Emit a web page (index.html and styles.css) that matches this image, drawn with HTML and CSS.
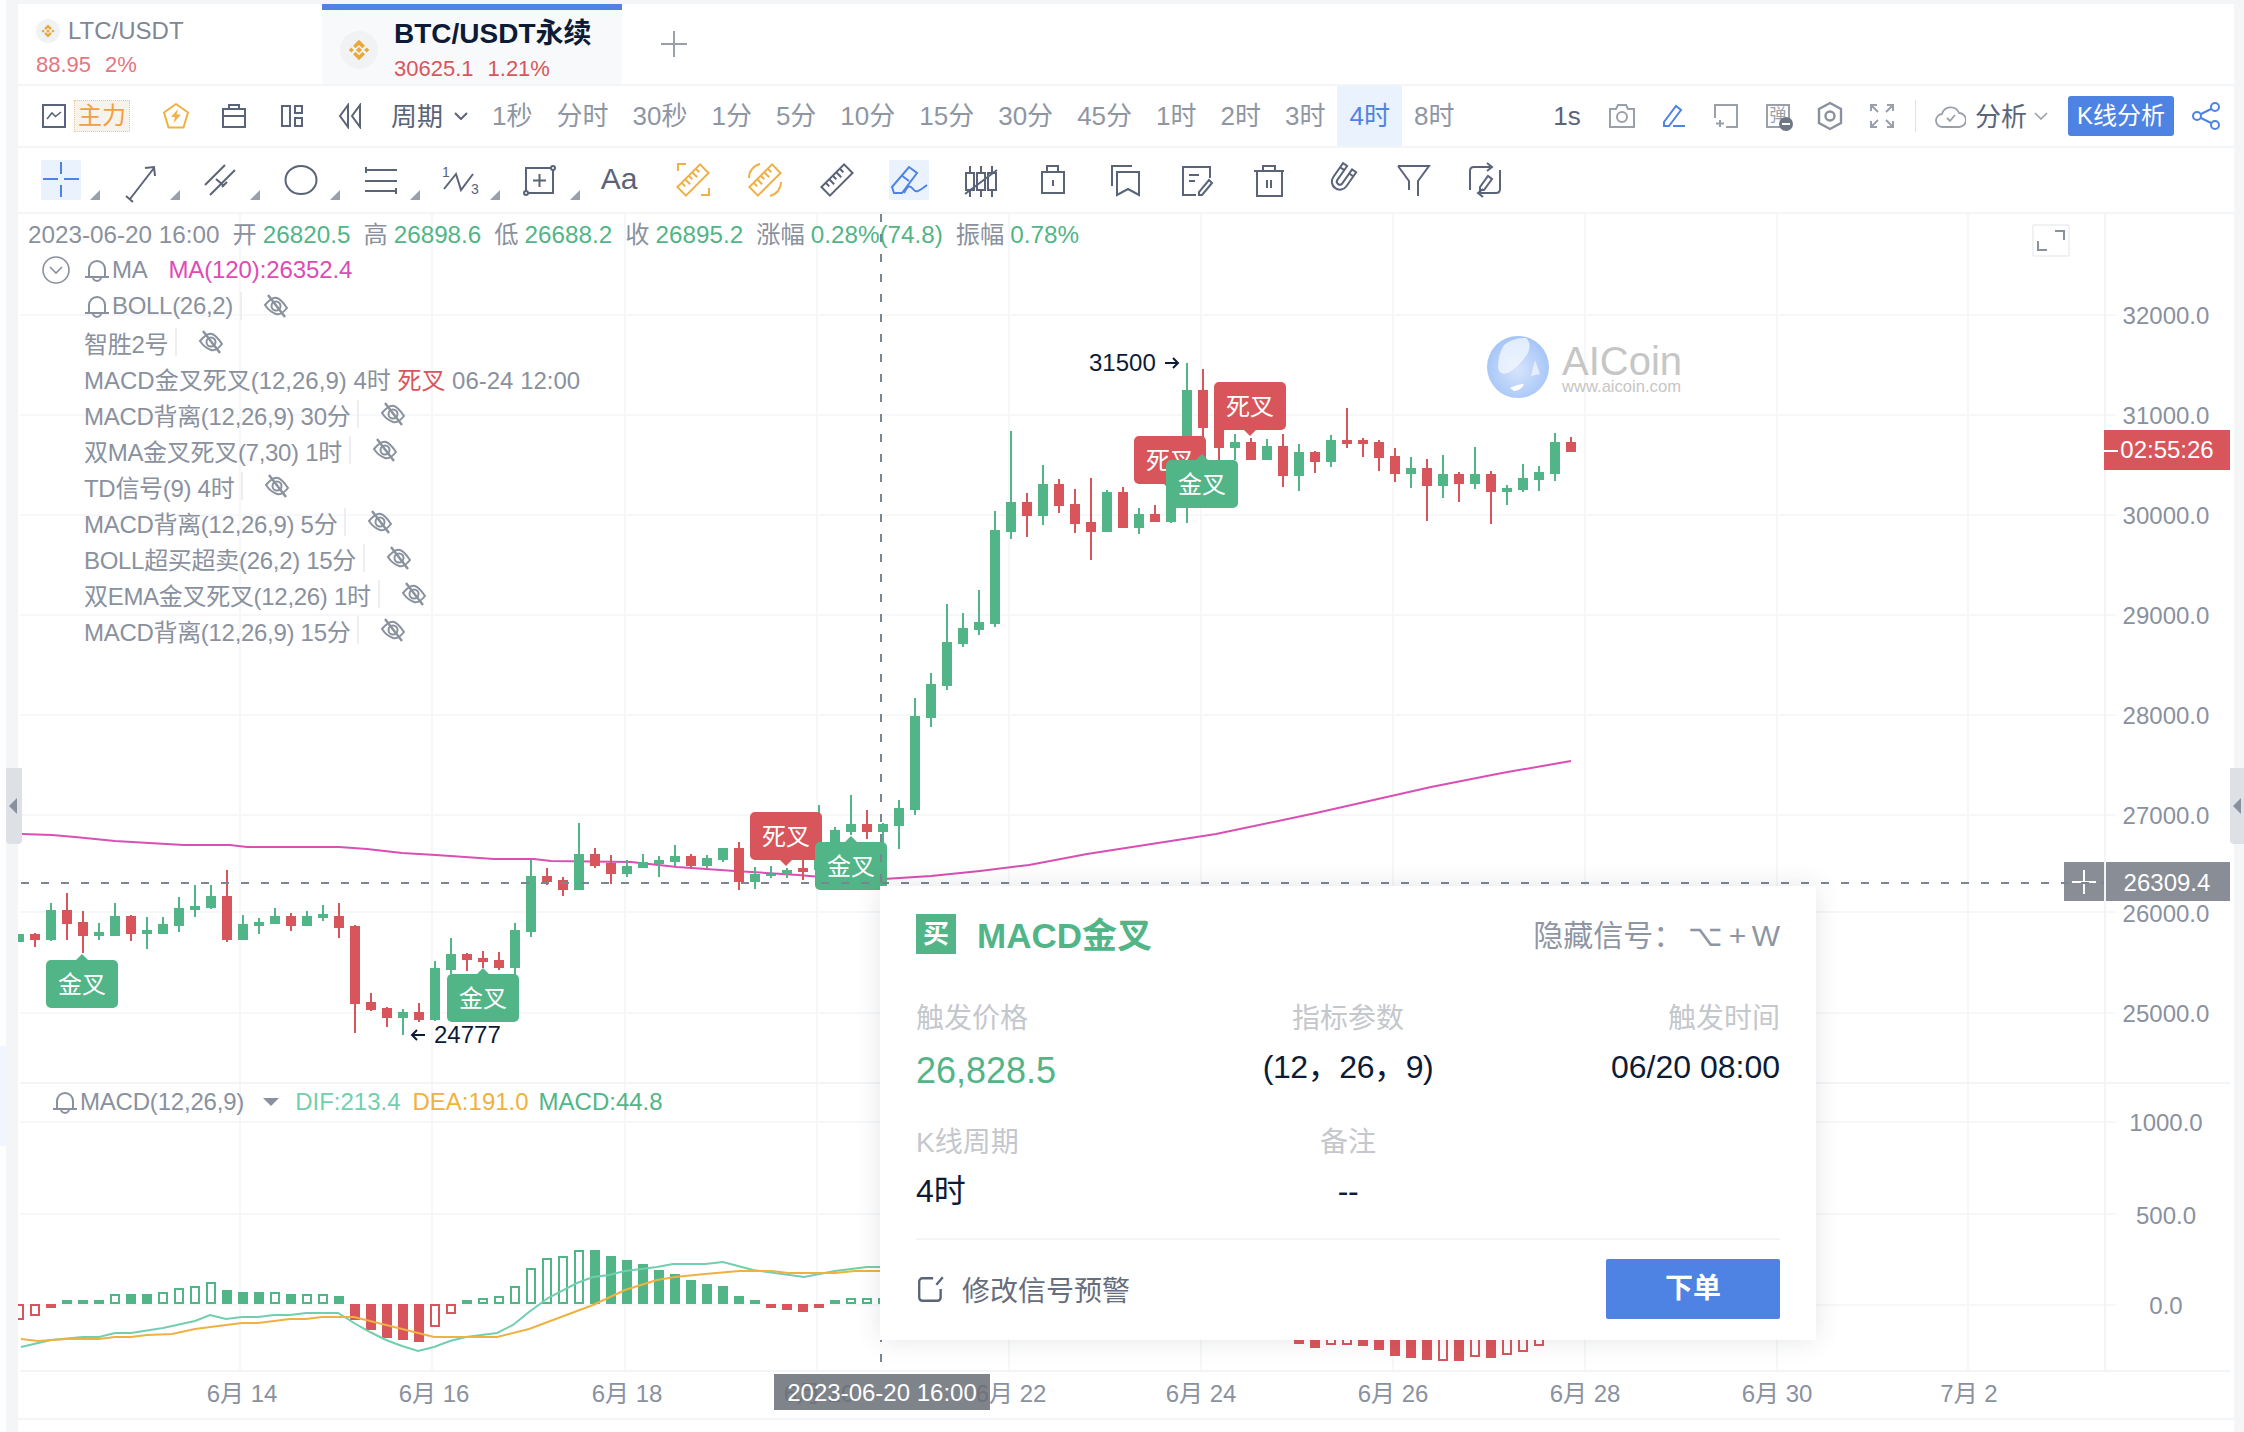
FILE: index.html
```html
<!DOCTYPE html>
<html lang="en">
<head>
    <meta charset="UTF-8">
    <title>BTC/USDT永续 - AICoin</title>
    <link rel="stylesheet" href="styles.css">
</head>
<body>
    <svg class="defs" width="0" height="0">
        <symbol id="bnb" viewBox="0 0 32 32">
            <circle cx="16" cy="16" r="16" fill="#f1f2f4"/>
            <g fill="#e9a93a" transform="translate(4.5 4.5) scale(.72)">
                <path d="M16 4l7 7-3 3-4-4-4 4-3-3z"/>
                <path d="M16 28l7-7-3-3-4 4-4-4-3 3z"/>
                <path d="M4 16l3-3 3 3-3 3z"/>
                <path d="M28 16l-3-3-3 3 3 3z"/>
                <path d="M16 12.5l3.5 3.5-3.5 3.5-3.5-3.5z"/>
            </g>
        </symbol>
        <symbol id="bell" viewBox="0 0 26 24">
            <path d="M5 19V11a8 8 0 0 1 16 0v8M1 19h24M9 19a4 4 0 0 0 8 0" fill="none" stroke="#8a919e" stroke-width="2"/>
        </symbol>
        <symbol id="eye" viewBox="0 0 26 26">
            <path d="M2 12c5-6 9-8 12-7s6 4 10 10c-4 5-8 7-11 6S6 18 2 12z" fill="none" stroke="#8a919e" stroke-width="2"/>
            <circle cx="13" cy="13" r="4.5" fill="none" stroke="#8a919e" stroke-width="2"/>
            <path d="M5 2l17 22" stroke="#8a919e" stroke-width="2.4"/>
        </symbol>
        <symbol id="ruler" viewBox="0 0 40 40">
            <g fill="none" stroke="currentColor" stroke-width="2" transform="rotate(-45 20 20)">
                <rect x="4" y="14" width="32" height="12"/>
                <path d="M10 14v5M15 14v7M20 14v5M25 14v7M30 14v5"/>
            </g>
        </symbol>
        <symbol id="arrow" viewBox="0 0 16 12">
            <path d="M1 6h13M9 1l5 5-5 5" fill="none" stroke="#0d1b36" stroke-width="2"/>
        </symbol>
    </svg>

    <div class="left-strip"><div class="strip-active"></div></div>

    <div class="main">
        <!-- symbol tabs -->
        <div class="tabs">
            <div class="tab">
                <div class="tab-name">
                    <svg class="coin-small"><use href="#bnb"/></svg>
                    <span>LTC/USDT</span>
                </div>
                <div class="tab-price"><span>88.95</span><span>2%</span></div>
            </div>
            <div class="tab tab-active">
                <svg class="coin-big"><use href="#bnb"/></svg>
                <div>
                    <div class="tab-name">BTC/USDT永续</div>
                    <div class="tab-price"><span>30625.1</span><span>1.21%</span></div>
                </div>
            </div>
            <svg class="tab-add" width="26" height="26" viewBox="0 0 26 26"><path d="M13 0v26M0 13h26" stroke="#9aa0ab" stroke-width="2"/></svg>
        </div>

        <!-- period toolbar -->
        <div class="toolbar">
            <svg class="icon first" width="24" height="24" viewBox="0 0 24 24" fill="none" stroke="#5a6478" stroke-width="2"><rect x="1" y="1" width="22" height="22"/><path d="M5 15l5-6 3.500 3.500 5.500-4.500" stroke-width="1.600"/></svg>
            <span class="main-force">主力</span>
            <div class="icon-btn force-gap">
                <svg width="28" height="28" viewBox="0 0 28 28" fill="none" stroke="#efb13f" stroke-width="2" stroke-linejoin="round"><path d="M14 2l12 8.500-4.500 15h-15L2 10.500z"/><path d="M16 7l-7 8h4l-1.500 6 7.500-8.500h-4.500z" fill="#efb13f" stroke="none"/></svg>
            </div>
            <div class="icon-btn">
                <svg width="24" height="24" viewBox="0 0 24 24" fill="none" stroke="#5a6478" stroke-width="2"><rect x="1" y="5" width="22" height="18"/><path d="M1 12h22M7 5V1h10v4"/></svg>
            </div>
            <div class="icon-btn">
                <svg width="22" height="22" viewBox="0 0 22 22" fill="none" stroke="#5a6478" stroke-width="2"><rect x="1" y="1" width="8" height="20"/><rect x="14" y="1" width="7" height="7"/><rect x="14" y="13" width="7" height="8"/></svg>
            </div>
            <div class="icon-btn">
                <svg width="24" height="26" viewBox="0 0 24 26" fill="none" stroke="#5a6478" stroke-width="2"><path d="M10 2L2 13l8 11zM22 2l-8 11 8 11z"/></svg>
            </div>
            <span class="period-menu">周期</span>
            <svg class="chevron" width="14" height="8" viewBox="0 0 14 8" fill="none" stroke="#5a6478" stroke-width="2"><path d="M1 1l6 6 6-6"/></svg>
            <div class="periods">
                <span>1秒</span><span>分时</span><span>30秒</span><span>1分</span><span>5分</span><span>10分</span><span>15分</span><span>30分</span><span>45分</span><span>1时</span><span>2时</span><span>3时</span><span class="on">4时</span><span>8时</span>
            </div>

            <span class="tick-1s">1s</span>
            <div class="tool-icon">
                <svg width="26" height="24" viewBox="0 0 26 24" fill="none" stroke="#9aa0aa" stroke-width="2"><path d="M1 5h6l2-4h8l2 4h6v18H1z"/><circle cx="13" cy="13" r="5"/></svg>
            </div>
            <div class="tool-icon">
                <svg width="26" height="24" viewBox="0 0 26 24" fill="none" stroke="#4f83e3" stroke-width="2"><path d="M3 18L15 2l5 4L8 22H3zM12 22h12"/></svg>
            </div>
            <div class="tool-icon">
                <svg width="24" height="24" viewBox="0 0 24 24" fill="none" stroke="#9aa0aa" stroke-width="2"><path d="M1 14V1h22v22H12M6 16v7M2 19.500h8"/></svg>
            </div>
            <div class="tool-icon">
                <div class="pop-icon">弹<i></i></div>
            </div>
            <div class="tool-icon">
                <svg width="26" height="30" viewBox="0 0 26 30" fill="none" stroke="#8a919e" stroke-width="2.400"><path d="M13 2l11 6v14l-11 6-11-6V8z"/><circle cx="13" cy="15" r="4.500"/></svg>
            </div>
            <div class="tool-icon">
                <svg width="24" height="24" viewBox="0 0 24 24" fill="none" stroke="#9aa0aa" stroke-width="2"><path d="M1 7V1h6M1 1l7 7M17 1h6v6M23 1l-7 7M1 17v6h6M1 23l7-7M23 17v6h-6M23 23l-7-7"/></svg>
            </div>
            <div class="tool-sep"></div>
            <svg class="cloud" width="31" height="24" viewBox="0 0 31 24" fill="none" stroke="#9aa0aa" stroke-width="1.800"><path d="M8 23a6.500 6.500 0 0 1-1-13A9 9 0 0 1 24 9a7 7 0 0 1 0 14z"/><path d="M12 14l3 3 5-6"/></svg>
            <span class="analysis">分析</span>
            <svg class="chevron-thin" width="14" height="8" viewBox="0 0 14 8" fill="none" stroke="#9aa0aa" stroke-width="1.600"><path d="M1 1l6 6 6-6"/></svg>
            <span class="kline-btn">K线分析</span>
            <svg class="share" width="28" height="28" viewBox="0 0 28 28" fill="none" stroke="#4f83e3" stroke-width="2"><circle cx="5" cy="14" r="4"/><circle cx="23" cy="5" r="4"/><circle cx="23" cy="23" r="4"/><path d="M9 12l10-5M9 16l10 5"/></svg>
        </div>

        <!-- drawing tools -->
        <div class="drawbar">
            <div class="tool more on-blue">
                <svg width="40" height="40" viewBox="0 0 40 40" stroke="#4f83e3" stroke-width="2" fill="none"><path d="M2 19h15M23 19h15M20 2v12M20 25v12"/></svg>
            </div>
            <div class="tool more">
                <svg width="40" height="40" viewBox="0 0 40 40" stroke="#5a6478" stroke-width="2" fill="none"><path d="M9 39L33 8M5 36l7 6M24 8l9-1 1 9"/></svg>
            </div>
            <div class="tool more">
                <svg width="40" height="40" viewBox="0 0 40 40" stroke="#5a6478" stroke-width="2" fill="none"><path d="M4 25L24 5M9 35l25-25M15 19l7 6M21 27l5-5"/></svg>
            </div>
            <div class="tool more">
                <svg width="40" height="40" viewBox="0 0 40 40" stroke="#5a6478" stroke-width="2" fill="none"><ellipse cx="20" cy="20" rx="15.500" ry="14"/></svg>
            </div>
            <div class="tool more">
                <svg width="40" height="40" viewBox="0 0 40 40" stroke="#5a6478" stroke-width="2" fill="none"><path d="M4 10h32M4 21h32M4 31h32M5 7v6M35 28v6"/></svg>
            </div>
            <div class="tool more">
                <svg width="40" height="40" viewBox="0 0 40 40" stroke="#5a6478" stroke-width="2" fill="none"><path d="M3 29L15 14l5 16 12-16"/><text class="wave-num" x="1" y="17">1</text><text class="wave-num" x="30" y="34">3</text></svg>
            </div>
            <div class="tool more">
                <svg width="40" height="40" viewBox="0 0 40 40" stroke="#5a6478" stroke-width="2" fill="none"><path d="M5 31V8h25M32 10v23H7M18.500 14v13M12 20.500h13"/><circle cx="5" cy="33" r="2"/><circle cx="32" cy="8" r="2"/></svg>
            </div>
            <div class="tool tool-text">Aa</div>
            <div class="tool orange">
                <svg width="40" height="40"><use href="#ruler"/></svg>
                <svg class="over" width="40" height="40" viewBox="0 0 40 40" fill="none" stroke="currentColor" stroke-width="2"><path d="M5 11V4h8M36 28v7h-8"/></svg>
            </div>
            <div class="tool orange">
                <svg width="40" height="40"><use href="#ruler"/></svg>
                <svg class="over" width="40" height="40" viewBox="0 0 40 40" fill="none" stroke="currentColor" stroke-width="2"><path d="M4 18A14 14 0 0 1 15 4M36 22a14 14 0 0 1-11 14"/></svg>
            </div>
            <div class="tool slate">
                <svg width="40" height="40"><use href="#ruler"/></svg>
            </div>
            <div class="tool on-blue">
                <svg width="40" height="40" viewBox="0 0 40 40" stroke="#4f83e3" stroke-width="2" fill="none"><path d="M3 27L20 7l8 6-15 20H5zM12 15l8 6M15 33c4-8 6-8 9-4s5 3 14-4"/></svg>
            </div>
            <div class="tool">
                <svg width="40" height="40" viewBox="0 0 40 40" stroke="#5a6478" stroke-width="2" fill="none"><rect x="5" y="13" width="8" height="17"/><rect x="16" y="13" width="8" height="17"/><rect x="27" y="13" width="8" height="17"/><path d="M9 6v7M9 30v7M20 6v7M20 30v7M31 6v7M31 30v7M4 34L36 10"/></svg>
            </div>
            <div class="tool">
                <svg width="40" height="40" viewBox="0 0 40 40" stroke="#5a6478" stroke-width="2" fill="none"><rect x="9" y="12" width="22" height="21"/><path d="M14 12V6h11v6M20 20v6"/></svg>
            </div>
            <div class="tool">
                <svg width="40" height="40" viewBox="0 0 40 40" stroke="#5a6478" stroke-width="2" fill="none"><path d="M7 26V6h20M12 12h22v23l-11-6-11 6z"/></svg>
            </div>
            <div class="tool">
                <svg width="40" height="40" viewBox="0 0 40 40" stroke="#5a6478" stroke-width="2" fill="none"><path d="M33 18V7H6v28h13M12 15h10M12 21h6M35 23L25 35h-3v-3l10-12z"/></svg>
            </div>
            <div class="tool">
                <svg width="40" height="40" viewBox="0 0 40 40" stroke="#5a6478" stroke-width="2" fill="none"><path d="M5 11h30M14 11V6h12v5M8 11v25h25V11M18 20v8M22 20v8"/></svg>
            </div>
            <div class="tool">
                <svg width="40" height="40" viewBox="0 0 40 40" stroke="#5a6478" stroke-width="2" fill="none"><path transform="rotate(35 20 20)" d="M12 5v17a8 8 0 0 0 16 0V5h-5v17a3 3 0 0 1-6 0V5zM12 10h5M23 10h5"/></svg>
            </div>
            <div class="tool">
                <svg width="40" height="40" viewBox="0 0 40 40" stroke="#5a6478" stroke-width="2" fill="none"><path d="M5 6h31L25 21v15M5 6l11 15v9"/></svg>
            </div>
            <div class="tool">
                <svg width="40" height="40" viewBox="0 0 40 40" stroke="#5a6478" stroke-width="2" fill="none"><path d="M5 30V11q0-4 4-4h17M22 3l5 4-5 4M35 10v19q0 4-4 4H14M18 29l-5 4 5 4M15 27l8-11 4 3-8 11h-4z"/></svg>
            </div>
        </div>

        <!-- chart -->
        <div class="chart">
            <svg class="chart-svg" id="chart" width="2216" height="1204" viewBox="18 214 2216 1204">
                <defs>
                    <radialGradient id="globe" cx=".5" cy=".55" r=".6">
                        <stop offset="0" stop-color="#d6e4fb"/>
                        <stop offset="1" stop-color="#9fc2f7"/>
                    </radialGradient>
                </defs>
                <!-- grid -->
                <g class="grid">
                    <path d="M20 315H2116M20 415H2116M20 515H2116M20 615H2116M20 715H2116M20 815H2116M20 912H2116M20 1013H2116"/>
                    <path d="M20 1122H2116M20 1214H2116M20 1305H2116"/>
                    <path d="M240 214V1370M432 214V1370M625 214V1370M817 214V1370M1009 214V1370M1201 214V1370M1393 214V1370M1585 214V1370M1777 214V1370M1968 214V1370"/>
                </g>
                <path class="pane-line" d="M20 1083H2230M20 1371H2230M2105 214V1370"/>

                <!-- watermark -->
                <circle cx="1518" cy="367" r="31" fill="url(#globe)"/>
                <path d="M1504 345q10-8 22-7 6 5 2 15-9 14-20 20-9 3-10-6 0-12 6-22z" fill="#f4f8fe" opacity=".75"/>
                <path d="M1510 388q8-4 14-4-2 6-10 7z" fill="#fff"/>
                <path d="M1535 360l5 14-9 2z" fill="#fff" opacity=".6"/>
                <text class="wm-title" x="1562" y="375">AICoin</text>
                <text class="wm-url" x="1562" y="392">www.aicoin.com</text>

                <!-- expand toggle -->
                <path class="expand-box" d="M2033 225h36v31h-36z"/>
                <path class="expand-mark" d="M2055 231h9v9M2047 250h-9v-9"/>

                <g id="macd"></g>
                <polyline id="dif" class="line-dif"></polyline>
                <polyline id="dea" class="line-dea"></polyline>
                <polyline id="ma" class="line-ma"></polyline>
                <g id="candles"></g>

                <!-- price axis -->
                <g class="axis-labels">
                    <text x="2166" y="324">32000.0</text>
                    <text x="2166" y="424">31000.0</text>
                    <text x="2166" y="524">30000.0</text>
                    <text x="2166" y="624">29000.0</text>
                    <text x="2166" y="724">28000.0</text>
                    <text x="2166" y="824">27000.0</text>
                    <text x="2166" y="922">26000.0</text>
                    <text x="2166" y="1022">25000.0</text>
                    <text x="2166" y="1131">1000.0</text>
                    <text x="2166" y="1224">500.0</text>
                    <text x="2166" y="1314">0.0</text>
                </g>
                <!-- time axis -->
                <g class="axis-labels">
                    <text x="242" y="1402">6月 14</text>
                    <text x="434" y="1402">6月 16</text>
                    <text x="627" y="1402">6月 18</text>
                    <text x="819" y="1402">6月 20</text>
                    <text x="1011" y="1402">6月 22</text>
                    <text x="1201" y="1402">6月 24</text>
                    <text x="1393" y="1402">6月 26</text>
                    <text x="1585" y="1402">6月 28</text>
                    <text x="1777" y="1402">6月 30</text>
                    <text x="1969" y="1402">7月 2</text>
                </g>
            </svg>

            <!-- signal tags -->
            <div class="tag green up tag-a">金叉</div>
            <div class="tag green up tag-b">金叉</div>
            <div class="tag red down tag-c">死叉</div>
            <div class="tag green up tag-d">金叉</div>
            <div class="tag red down tag-e">死叉</div>
            <div class="tag red down tag-f">死叉</div>
            <div class="tag green up tag-g">金叉</div>
            <div class="note note-high">31500<svg class="note-arrow"><use href="#arrow"/></svg></div>
            <div class="note note-low"><svg class="note-arrow flip"><use href="#arrow"/></svg>24777</div>

            <!-- legend -->
            <div class="legend">
                <div class="ohlc">2023-06-20 16:00<span class="lbl">开</span><b>26820.5</b><span class="lbl">高</span><b>26898.6</b><span class="lbl">低</span><b>26688.2</b><span class="lbl">收</span><b>26895.2</b><span class="lbl">涨幅</span><b>0.28%(74.8)</b><span class="lbl">振幅</span><b>0.78%</b></div>
                <div class="row">
                    <svg class="collapse" width="28" height="28" viewBox="0 0 28 28" fill="none" stroke="#8a919e" stroke-width="1.600"><circle cx="14" cy="14" r="13"/><path d="M8 11l6 6 6-6"/></svg>
                    <svg class="bell"><use href="#bell"/></svg>
                    <span>MA</span>
                    <span class="ma-val">MA(120):26352.4</span>
                </div>
                <div class="row"><svg class="bell"><use href="#bell"/></svg><span>BOLL(26,2)</span><i class="sep"></i><svg class="eye"><use href="#eye"/></svg></div>
                <div class="row"><span>智胜2号</span><i class="sep"></i><svg class="eye"><use href="#eye"/></svg></div>
                <div class="row wide"><span>MACD金叉死叉(12,26,9) 4时 <em>死叉</em> 06-24 12:00</span></div>
                <div class="row"><span>MACD背离(12,26,9) 30分</span><i class="sep"></i><svg class="eye"><use href="#eye"/></svg></div>
                <div class="row"><span>双MA金叉死叉(7,30) 1时</span><i class="sep"></i><svg class="eye"><use href="#eye"/></svg></div>
                <div class="row"><span>TD信号(9) 4时</span><i class="sep"></i><svg class="eye"><use href="#eye"/></svg></div>
                <div class="row"><span>MACD背离(12,26,9) 5分</span><i class="sep"></i><svg class="eye"><use href="#eye"/></svg></div>
                <div class="row"><span>BOLL超买超卖(26,2) 15分</span><i class="sep"></i><svg class="eye"><use href="#eye"/></svg></div>
                <div class="row"><span>双EMA金叉死叉(12,26) 1时</span><i class="sep"></i><svg class="eye"><use href="#eye"/></svg></div>
                <div class="row"><span>MACD背离(12,26,9) 15分</span><i class="sep"></i><svg class="eye"><use href="#eye"/></svg></div>
            </div>

            <div class="macd-legend">
                <svg class="bell"><use href="#bell"/></svg>
                <span class="macd-name">MACD(12,26,9)</span>
                <i class="caret"></i>
                <span class="dif-val">DIF:213.4</span>
                <span class="dea-val">DEA:191.0</span>
                <span class="macd-val">MACD:44.8</span>
            </div>

            <!-- axis flags -->
            <div class="price-live"><i></i>02:55:26</div>
            <div class="cross-plus"><svg width="24" height="24" viewBox="0 0 24 24"><path d="M12 0v24M0 12h24" stroke="#fff" stroke-width="2"/></svg></div>
            <div class="price-cross">26309.4</div>
            <div class="time-cross">2023-06-20 16:00</div>

            <svg class="crosshair" width="2216" height="1204" viewBox="18 214 2216 1204">
                <path d="M21 883H2104M881 214V1370"/>
            </svg>

            <!-- signal popup -->
            <div class="signal-card">
                <div class="signal-head">
                    <span class="buy-badge">买</span>
                    <span class="signal-title">MACD金叉</span>
                    <span class="signal-hint">隐藏信号： ⌥ + W</span>
                </div>
                <div class="signal-grid">
                    <div class="cell">
                        <div class="cell-label">触发价格</div>
                        <div class="cell-value price">26,828.5</div>
                    </div>
                    <div class="cell mid">
                        <div class="cell-label">指标参数</div>
                        <div class="cell-value">(12，26，9)</div>
                    </div>
                    <div class="cell end">
                        <div class="cell-label">触发时间</div>
                        <div class="cell-value">06/20 08:00</div>
                    </div>
                    <div class="cell">
                        <div class="cell-label">K线周期</div>
                        <div class="cell-value">4时</div>
                    </div>
                    <div class="cell mid">
                        <div class="cell-label">备注</div>
                        <div class="cell-value">--</div>
                    </div>
                </div>
                <div class="signal-foot">
                    <svg width="30" height="30" viewBox="0 0 28 28" fill="none" stroke="#5a6478" stroke-width="2.200"><path d="M16 4H6a3 3 0 0 0-3 3v15a3 3 0 0 0 3 3h14a3 3 0 0 0 3-3V14M25 3l-6 7"/></svg>
                    <span class="edit-link">修改信号预警</span>
                    <span class="order-btn">下单</span>
                </div>
            </div>
        </div>
        <div class="bottom-strip"></div>
    </div>

    <div class="handle handle-left"><i></i></div>
    <div class="handle handle-right"><i></i></div>

    <script src="chart.js"></script>
</body>
</html>
```

FILE: styles.css
```css
:root {
    --blue: #4f83e3;
    --green: #52b587;
    --red: #d8565b;
    --gray: #8a919e;
    --slate: #5a6478;
    --navy: #0d1b36;
    --gutter: #f3f5f7;
}

* { box-sizing: border-box; }

body {
    margin: 0;
    width: 2244px;
    height: 1432px;
    overflow: hidden;
    display: flex;
    position: relative;
    background: #fdfdfe;
    color: var(--gray);
    font-family: "Liberation Sans", "Noto Sans CJK SC", sans-serif;
    font-size: 24px;
}

.defs { position: absolute; }

.left-strip {
    width: 6px;
    flex: none;
    padding-top: 1046px;
}
.strip-active {
    height: 100px;
    background: #f0f5fe;
}

.main {
    width: 2238px;
    flex: none;
    padding: 4px 10px 0 12px;
    background: var(--gutter);
}

/* Tabs */
.tabs {
    height: 80px;
    margin-bottom: 2px;
    display: flex;
    align-items: center;
    background: #fff;
}
.tab {
    width: 296px;
    height: 80px;
    margin-right: 8px;
    padding: 15px 0 0 18px;
}
.tab-name {
    display: flex;
    align-items: center;
    gap: 8px;
    height: 24px;
    color: #7f8795;
}
.coin-small { width: 24px; height: 24px; }
.coin-big { width: 38px; height: 38px; flex: none; }
.tab-price {
    display: flex;
    gap: 14px;
    margin-top: 9px;
    height: 26px;
    line-height: 26px;
    font-size: 22px;
    color: #e4767f;
}
.tab-active {
    width: 300px;
    margin-right: 0;
    padding: 6px 0 0 18px;
    background: #f8f9fb;
    border-top: 6px solid var(--blue);
    display: flex;
    align-items: center;
    gap: 16px;
}
.tab-active .tab-name {
    height: 34px;
    margin-top: -4px;
    font-size: 28px;
    font-weight: bold;
    color: var(--navy);
}
.tab-active .tab-price {
    margin-top: 8px;
    color: var(--red);
}
.tab-add {
    margin-left: 39px;
}

/* Period toolbar */
.toolbar {
    height: 60px;
    margin-bottom: 2px;
    padding: 0 14px 0 24px;
    display: flex;
    align-items: center;
    background: #fff;
}
.main-force {
    width: 56px;
    height: 32px;
    margin-left: 8px;
    line-height: 30px;
    text-align: center;
    color: #ef9f3f;
    background: #f6f2ec;
    border: 1px dotted #efc88a;
}
.icon-btn {
    width: 58px;
    display: flex;
    justify-content: center;
}
.force-gap { margin-left: 17px; }
.period-menu {
    margin: -3px 0 0 12px;
    font-size: 26px;
    color: var(--slate);
}
.chevron { margin-left: 11px; }
.periods {
    display: flex;
    height: 60px;
    margin-left: 12px;
    font-size: 26px;
    color: #8f96a3;
}
.periods span {
    padding: 0 12px;
    line-height: 60px;
}
.periods .on {
    color: var(--blue);
    background: #eaf2fd;
}
.tick-1s {
    width: 58px;
    margin-left: auto;
    text-align: center;
    font-size: 26px;
    color: var(--slate);
}
.tool-icon {
    width: 52px;
    display: flex;
    justify-content: center;
}
.pop-icon {
    position: relative;
    width: 24px;
    height: 24px;
    border: 2px solid #9aa0aa;
    font-size: 17px;
    line-height: 20px;
    text-align: center;
    color: #9aa0aa;
}
.pop-icon i {
    position: absolute;
    right: -5px;
    bottom: -5px;
    width: 14px;
    height: 14px;
    border-radius: 50%;
    background: #6f7684;
}
.pop-icon i::after {
    content: "";
    position: absolute;
    left: 3px;
    top: 6px;
    width: 8px;
    height: 2px;
    background: #fff;
}
.tool-sep {
    width: 1px;
    height: 32px;
    margin-left: 7px;
    background: #e1e3e7;
}
.cloud { margin-left: 19px; }
.analysis {
    margin: -3px 0 0 9px;
    font-size: 26px;
    color: var(--slate);
}
.chevron-thin { margin-left: 7px; }
.kline-btn {
    width: 106px;
    height: 40px;
    margin-left: 20px;
    line-height: 40px;
    text-align: center;
    color: #fff;
    background: var(--blue);
    border-radius: 3px;
}
.share { margin-left: 18px; }

/* Drawing tools */
.drawbar {
    position: relative;
    z-index: 0;
    height: 64px;
    margin-bottom: 2px;
    padding-left: 3px;
    display: flex;
    align-items: center;
    background: #fff;
}
.tool {
    position: relative;
    width: 72px;
    height: 40px;
    display: flex;
    justify-content: center;
    color: var(--slate);
}
.tool svg { overflow: visible; }
.tool.more { width: 80px; }
.tool.more::after {
    content: "";
    position: absolute;
    right: 1px;
    bottom: 0;
    border-style: solid;
    border-width: 0 0 10px 10px;
    border-color: transparent transparent #9aa0aa transparent;
}
.tool.on-blue::before {
    content: "";
    position: absolute;
    left: 50%;
    top: 0;
    width: 40px;
    height: 40px;
    margin-left: -20px;
    background: #eaf2fd;
    border-radius: 2px;
    z-index: -1;
}
.tool-text {
    width: 76px;
    font-size: 30px;
    line-height: 38px;
}
.tool.orange { color: #eeb048; }
.tool .over {
    position: absolute;
    left: 16px;
    top: 0;
}
.wave-num {
    font-size: 14px;
    stroke: none;
    fill: var(--slate);
}

/* Chart */
.chart {
    position: relative;
    height: 1204px;
    background: #fff;
}
.chart-svg {
    display: block;
}
.grid path {
    fill: none;
    stroke: #f6f7f8;
    stroke-width: 2;
}
.pane-line {
    fill: none;
    stroke: #f3f4f6;
    stroke-width: 2;
}
.wm-title {
    font-size: 40px;
    fill: #c6c6c6;
}
.wm-url {
    font-size: 16.600px;
    fill: #c6c6c6;
}
.expand-box {
    fill: none;
    stroke: #e3e5e9;
}
.expand-mark {
    fill: none;
    stroke: #8a919e;
    stroke-width: 2;
}
.line-ma, .line-dif, .line-dea {
    fill: none;
    stroke-width: 2;
}
.line-ma { stroke: #d94fb4; }
.line-dif { stroke: #71cfae; }
.line-dea { stroke: #efb13f; }
.axis-labels text {
    font-size: 24px;
    fill: var(--gray);
    text-anchor: middle;
}

/* Signal tags on the candles */
.tag {
    position: absolute;
    width: 72px;
    height: 48px;
    line-height: 50px;
    text-align: center;
    color: #fff;
    border-radius: 5px;
}
.tag.green { background: var(--green); }
.tag.red { background: var(--red); }
.tag::after {
    content: "";
    position: absolute;
    left: 30px;
    border-left: 6px solid transparent;
    border-right: 6px solid transparent;
}
.tag.up::after {
    bottom: 100%;
    border-bottom: 6px solid var(--green);
}
.tag.down::after {
    top: 100%;
    border-top: 6px solid var(--red);
}
.tag-a { left: 28px; top: 746px; }
.tag-b { left: 429px; top: 760px; }
.tag-c { left: 732px; top: 598px; }
.tag-d { left: 797px; top: 628px; }
.tag-e { left: 1196px; top: 168px; }
.tag-f { left: 1116px; top: 222px; }
.tag-g { left: 1148px; top: 246px; }

.note {
    position: absolute;
    height: 28px;
    display: flex;
    align-items: center;
    gap: 8px;
    color: var(--navy);
}
.note-arrow {
    width: 16px;
    height: 12px;
}
.note-arrow.flip { transform: scaleX(-1); }
.note-high { left: 1071px; top: 135px; }
.note-low { left: 392px; top: 807px; }

/* Indicator legend */
.legend {
    position: absolute;
    left: 10px;
    top: 3px;
}
.ohlc {
    height: 35px;
    line-height: 36px;
    font-size: 24.250px;
    white-space: nowrap;
}
.ohlc .lbl { margin: 0 6px 0 13px; }
.ohlc b {
    font-weight: normal;
    color: var(--green);
}
.row {
    height: 36px;
    padding-left: 56px;
    display: flex;
    align-items: center;
    white-space: nowrap;
    letter-spacing: -.3px;
}
.row.wide { letter-spacing: 0; }
.row em {
    font-style: normal;
    color: var(--red);
}
.collapse {
    margin: 0 14px 0 -42px;
    flex: none;
}
.bell {
    width: 26px;
    height: 24px;
    margin-right: 2px;
    flex: none;
}
.ma-val {
    margin-left: 21px;
    letter-spacing: -.1px;
    color: #dd4bb5;
}
.sep {
    width: 2px;
    height: 28px;
    margin-left: 7px;
    background: #eceef1;
}
.eye {
    width: 26px;
    height: 26px;
    margin-left: 21px;
}

.macd-legend {
    position: absolute;
    left: 34px;
    top: 874px;
    height: 28px;
    display: flex;
    align-items: center;
}
.macd-name { letter-spacing: -.2px; }
.caret {
    width: 0;
    height: 0;
    margin: 0 16px 0 19px;
    border-left: 8px solid transparent;
    border-right: 8px solid transparent;
    border-top: 8px solid var(--gray);
}
.dif-val { color: #71cfae; }
.dea-val { margin-left: 12px; color: #efb13f; }
.macd-val { margin-left: 10px; color: var(--green); }

/* Axis flags */
.price-live {
    position: absolute;
    left: 2086px;
    top: 216px;
    width: 126px;
    height: 40px;
    line-height: 40px;
    text-align: center;
    color: #fff;
    background: var(--red);
}
.price-live i {
    position: absolute;
    left: 0;
    top: 20px;
    width: 14px;
    height: 2px;
    background: #fff;
}
.cross-plus, .price-cross {
    position: absolute;
    top: 648px;
    height: 39px;
    line-height: 42px;
    color: #fff;
    background: #898d95;
}
.cross-plus {
    left: 2046px;
    width: 40px;
    display: flex;
    align-items: center;
    justify-content: center;
}
.price-cross {
    left: 2088px;
    width: 124px;
    padding-right: 2px;
    text-align: center;
}
.time-cross {
    position: absolute;
    left: 756px;
    top: 1160px;
    width: 216px;
    height: 36px;
    line-height: 38px;
    text-align: center;
    color: #fff;
    background: rgba(105, 109, 118, .85);
}
.crosshair {
    position: absolute;
    left: 0;
    top: 0;
    pointer-events: none;
}
.crosshair path {
    fill: none;
    stroke: #7b8594;
    stroke-width: 2;
    stroke-dasharray: 8 12;
}

/* Side handles */
.handle {
    position: absolute;
    top: 768px;
    height: 76px;
    background: #dde1e5;
}
.handle i {
    position: absolute;
    top: 30px;
    border-top: 8px solid transparent;
    border-bottom: 8px solid transparent;
    border-right: 8px solid var(--gray);
}
.handle-left {
    left: 6px;
    width: 16px;
    border-radius: 0 0 4px 4px;
}
.handle-left i { left: 3px; }
.handle-right {
    left: 2230px;
    width: 14px;
    border-radius: 0 0 0 4px;
}
.handle-right i { left: 3px; }

/* Signal popup */
.signal-card {
    position: absolute;
    left: 862px;
    top: 672px;
    width: 936px;
    height: 454px;
    padding: 28px 36px 0;
    background: #fff;
    box-shadow: 0 0 24px rgba(40, 50, 70, .12);
}
.signal-head {
    height: 40px;
    display: flex;
    align-items: center;
}
.buy-badge {
    width: 40px;
    height: 40px;
    line-height: 40px;
    text-align: center;
    font-size: 26px;
    font-weight: bold;
    color: #fff;
    background: var(--green);
}
.signal-title {
    margin: -3px 0 0 21px;
    font-size: 35px;
    font-weight: bold;
    color: var(--green);
}
.signal-hint {
    margin: -3px 0 0 auto;
    font-size: 30px;
    word-spacing: -3px;
    color: #8f96a3;
}
.signal-grid {
    margin-top: 47px;
    display: grid;
    grid-template-columns: 1fr 1fr 1fr;
    row-gap: 36px;
}
.cell.mid { text-align: center; }
.cell.end { text-align: right; }
.cell-label {
    line-height: 36px;
    font-size: 28px;
    color: #c4c7cc;
}
.cell-value {
    margin-top: 13px;
    line-height: 34px;
    font-size: 32px;
    color: var(--navy);
}
.cell.mid .cell-value { letter-spacing: -.4px; }
.cell-value.price {
    margin-top: 16px;
    font-size: 36px;
    line-height: 36px;
    color: var(--green);
}
.signal-foot {
    margin-top: 30px;
    padding-top: 19px;
    border-top: 2px solid #f4f5f6;
    display: flex;
    align-items: center;
}
.edit-link {
    margin-left: 16px;
    font-size: 28px;
    color: #666e7e;
}
.order-btn {
    width: 174px;
    height: 60px;
    margin-left: auto;
    line-height: 60px;
    text-align: center;
    font-size: 28px;
    font-weight: bold;
    color: #fff;
    background: var(--blue);
    border-radius: 2px;
}

.bottom-strip {
    height: 12px;
    margin-top: 2px;
    background: #fff;
}
```

FILE: chart.js
```js
// candle y values are chart pixels: [up?, wick top, body top, body bottom, wick bottom]
const G = 1, R = 0;
const candles = [
    [G,934,934,942,942],[R,933,934,940,947],[G,903,910,940,941],[R,893,910,924,940],[R,911,922,936,953],
    [G,923,932,936,940],[G,903,916,936,936],[R,915,916,934,941],[G,917,930,934,949],[G,917,924,934,934],
    [G,897,908,926,932],[G,885,906,910,917],[G,885,896,908,909],[R,870,896,940,942],[G,915,924,940,940],
    [G,918,922,926,934],[G,908,916,924,924],[R,913,916,926,931],[G,911,916,926,926],[G,905,914,918,921],
    [R,903,916,928,938],[R,925,926,1004,1033],[R,993,1002,1010,1011],[R,1007,1008,1018,1027],[G,1009,1012,1018,1035],
    [R,1003,1012,1020,1022],[G,961,968,1020,1021],[G,938,954,970,974],[R,953,954,960,971],[R,951,958,962,968],
    [R,952,960,968,970],[G,923,930,968,977],[G,860,876,932,937],[R,868,876,882,885],[R,877,880,890,896],
    [G,823,854,890,890],[R,848,854,866,868],[R,855,863,874,884],[G,860,866,874,877],[G,854,862,868,868],
    [G,856,860,864,877],[G,845,856,862,866],[R,854,856,866,868],[G,855,858,866,868],[G,848,848,860,862],
    [R,842,848,882,890],[G,867,874,882,889],[G,866,874,876,878],[G,868,870,874,878],[R,860,868,872,880],
    [G,805,845,870,885],[G,827,830,860,862],[G,795,824,832,835],[R,810,824,832,839],[G,823,824,832,847],
    [G,800,808,826,849],[G,698,716,810,815],[G,673,684,718,727],[G,604,642,686,690],[G,613,628,644,647],
    [G,590,622,630,635],[G,511,530,624,627],[G,431,502,532,539],[R,493,502,516,537],[G,465,484,516,525],
    [R,479,484,506,513],[R,489,504,524,533],[R,478,522,532,560],[G,490,492,532,532],[R,487,492,528,528],
    [G,508,514,528,534],[R,505,514,522,522],[G,470,480,522,523],[G,363,390,480,523],[R,369,390,428,447],
    [R,400,425,448,460],[G,434,442,448,460],[R,438,442,460,460],[G,439,446,460,460],[R,434,446,476,487],
    [G,444,452,476,491],[R,451,452,462,473],[G,435,440,462,467],[R,408,440,444,448],[R,438,440,444,457],
    [R,440,442,458,471],[R,448,456,474,482],[G,457,468,474,488],[R,459,468,486,521],[G,455,474,486,498],
    [R,472,474,484,502],[G,447,474,484,489],[R,471,474,492,524],[G,485,488,492,505],[G,464,478,490,492],
    [G,466,472,480,491],[G,433,442,474,481],[R,437,442,452,452]
];

// capital = solid bar, lower case = hollow; the part behind the popup is left out
const macdBars = "r-16 r-12 R-4 G4 G4 G4 g10 G10 G10 g12 g16 g18 g22 G14 G12 G12 g12 G10 g10 g10 G8 R-16 R-26 R-34 R-36 R-38 r-23 r-10 G4 g6 g8 g18 g36 g46 g48 g54 G54 G48 G44 G40 G34 G30 G24 G20 G18 G8 G4 R-4 R-6 R-8 R-4 G4 g6 g6 g6".split(" ");
const macdTail = "R-40 R-44 r-41 r-41 R-42 R-46 R-52 R-54 R-56 r-57 R-57 r-53 R-54 r-51 r-48 r-42".split(" ");
const MACD_ZERO = 1304;

const maLine = "22,834 52,835 75,837 115,841 149,843 184,845 230,845 247,847 339,847 367,849 402,853 436,855 494,859 534,859 551,861 631,862 677,867 735,871 798,875 821,877 884,879 931,876 980,871 1029,865 1087,854 1216,834 1316,813 1431,787 1502,773 1571,761";
const difLine = "21,1347 51,1340 83,1337 99,1337 115,1333 131,1333 163,1328 195,1321 210,1315 226,1319 242,1317 258,1317 274,1315 290,1315 306,1313 338,1313 354,1323 370,1332 386,1340 402,1346 418,1351 434,1347 450,1341 466,1337 497,1333 513,1325 529,1312 548,1298 577,1283 593,1277 609,1275 625,1271 657,1267 673,1264 705,1264 723,1262 753,1270 804,1277 835,1271 867,1267 880,1267";
const deaLine = "21,1339 38,1341 67,1339 99,1339 115,1337 131,1337 147,1335 172,1334 195,1329 226,1325 242,1323 258,1323 290,1319 306,1319 322,1317 354,1317 386,1325 418,1333 434,1337 497,1337 529,1329 561,1317 593,1305 625,1290 657,1280 675,1277 705,1274 739,1271 772,1271 788,1273 835,1273 855,1271 880,1271";

const COLORS = { up: "#52b587", down: "#d8565b" };
const NS = "http://www.w3.org/2000/svg";

function rect(parent, x, y, w, h, color, hollow) {
    const el = document.createElementNS(NS, "rect");
    if (hollow) {
        el.setAttribute("x", x + 1);
        el.setAttribute("y", y + 1);
        el.setAttribute("width", w - 2);
        el.setAttribute("height", Math.max(h - 2, 1));
        el.setAttribute("fill", "#fff");
        el.setAttribute("stroke", color);
        el.setAttribute("stroke-width", 2);
    } else {
        el.setAttribute("x", x);
        el.setAttribute("y", y);
        el.setAttribute("width", w);
        el.setAttribute("height", h);
        el.setAttribute("fill", color);
    }
    parent.appendChild(el);
}

function candleX(i) {
    return Math.round(18.5 + 16 * i);
}

function drawCandles() {
    const g = document.getElementById("candles");
    candles.forEach((c, i) => {
        const x = candleX(i);
        const color = c[0] ? COLORS.up : COLORS.down;
        rect(g, x - 1, c[1], 2, c[4] - c[1], color);
        rect(g, x - 5, c[2], 10, Math.max(c[3] - c[2], 2), color);
    });
}

function drawBar(g, i, code) {
    const h = parseInt(code.slice(1), 10);
    const color = code[0].toLowerCase() === "g" ? COLORS.up : COLORS.down;
    const hollow = code[0] === code[0].toLowerCase();
    const y = h > 0 ? MACD_ZERO - h : MACD_ZERO;
    rect(g, candleX(i) - 5, y, 10, Math.abs(h), color, hollow);
}

function drawMacd() {
    const g = document.getElementById("macd");
    macdBars.forEach((code, i) => drawBar(g, i, code));
    macdTail.forEach((code, i) => drawBar(g, i + 80, code));
}

document.getElementById("ma").setAttribute("points", maLine);
document.getElementById("dif").setAttribute("points", difLine);
document.getElementById("dea").setAttribute("points", deaLine);
drawMacd();
drawCandles();
```
